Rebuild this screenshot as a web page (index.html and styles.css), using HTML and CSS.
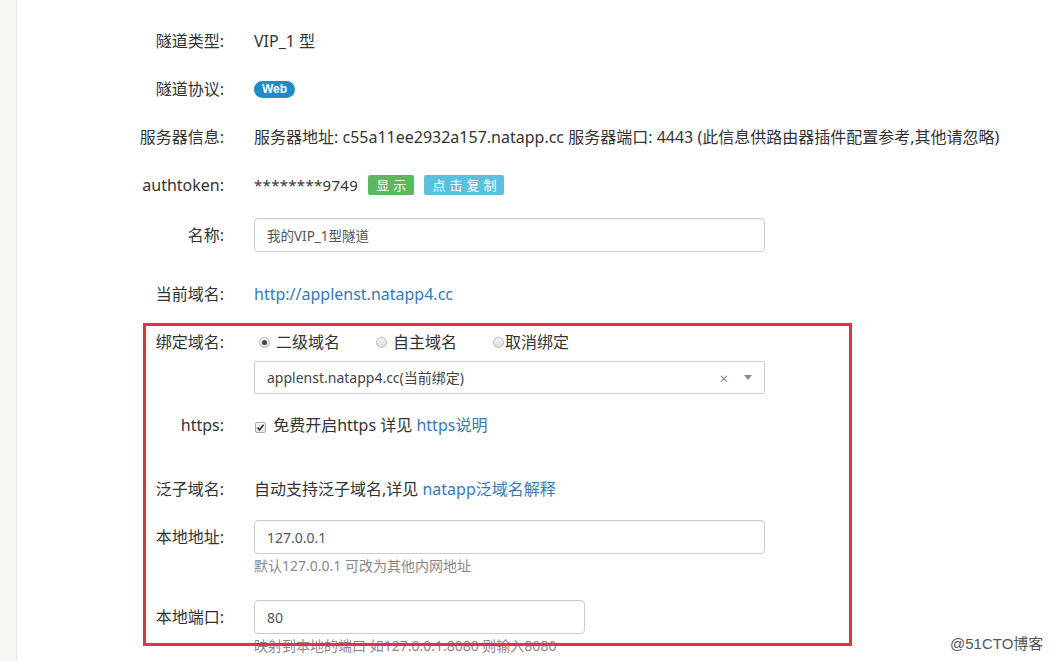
FILE: index.html
```
<!DOCTYPE html>
<html>
	<head>
		<title>隧道配置</title>
		<link rel="stylesheet" href="styles.css">
	</head>
	<body>
		<div class="pagina">
			<div class="lateral"></div>

			<div class="contenido">
				<form class="formulario">

					<div class="fila">
						<label class="etiqueta">隧道类型:</label>
						<div class="valor">VIP_1 型</div>
					</div>

					<div class="fila">
						<label class="etiqueta">隧道协议:</label>
						<div class="valor"><span class="insignia">Web</span></div>
					</div>

					<div class="fila">
						<label class="etiqueta">服务器信息:</label>
						<div class="valor">服务器地址: c55a11ee2932a157.natapp.cc 服务器端口: 4443 (此信息供路由器插件配置参考,其他请忽略)</div>
					</div>

					<div class="fila">
						<label class="etiqueta">authtoken:</label>
						<div class="valor">
							<span class="token">********9749</span>
							<span class="boton boton_verde">显示</span>
							<span class="boton boton_azul">点击复制</span>
						</div>
					</div>

					<div class="fila fila_ancha">
						<label class="etiqueta">名称:</label>
						<div class="valor">
							<input type="text" class="caja caja_larga caja_cjk" value="我的VIP_1型隧道">
						</div>
					</div>

					<div class="fila">
						<label class="etiqueta">当前域名:</label>
						<div class="valor"><a class="enlace" href="#">http://applenst.natapp4.cc</a></div>
					</div>

					<div class="fila fila_compuesta">
						<label class="etiqueta">绑定域名:</label>
						<div class="valor">
							<div class="radios">
								<span class="opcion"><span class="radio activo"></span>二级域名</span>
								<span class="opcion"><span class="radio"></span>自主域名</span>
								<span class="opcion pegada"><span class="radio"></span>取消绑定</span>
							</div>
							<div class="selector caja_larga">
								<span class="selector_texto">applenst.natapp4.cc(当前绑定)</span>
								<span class="selector_quitar">×</span>
								<span class="selector_flecha"></span>
							</div>
						</div>
					</div>

					<div class="fila fila_separada">
						<label class="etiqueta">https:</label>
						<div class="valor">
							<span class="casilla">
								<svg width="9" height="9" viewBox="0 0 9 9"><path d="M1.5 4.6 L3.6 6.8 L7.6 1.8" fill="none" stroke="#333" stroke-width="1.6"/></svg>
							</span>
							免费开启https 详见 <a class="enlace" href="#">https说明</a>
						</div>
					</div>

					<div class="fila">
						<label class="etiqueta">泛子域名:</label>
						<div class="valor">自动支持泛子域名,详见 <a class="enlace" href="#">natapp泛域名解释</a></div>
					</div>

					<div class="fila fila_compuesta fila_ayuda">
						<label class="etiqueta">本地地址:</label>
						<div class="valor">
							<input type="text" class="caja caja_larga" value="127.0.0.1">
							<div class="ayuda">默认127.0.0.1 可改为其他内网地址</div>
						</div>
					</div>

					<div class="fila fila_compuesta">
						<label class="etiqueta">本地端口:</label>
						<div class="valor">
							<input type="text" class="caja caja_corta" value="80">
							<div class="ayuda">映射到本地的端口 如127.0.0.1:8080 则输入8080</div>
						</div>
					</div>

				</form>

				<div class="marco_rojo"></div>
				<div class="marca">@51CTO博客</div>
			</div>
		</div>
	</body>
</html>
```

FILE: styles.css
```
	body
	{
		margin: 0;
		background-color: white;
		font-family: "Noto Sans", "Noto Sans CJK SC", sans-serif;
		font-size: 16px;
		color: #333;
		overflow: hidden;
	}

	.pagina
	{
		display: flex;
		height: 661px;
	}

	.lateral
	{
		width: 16px;
		background-color: #f8f7f1;
		border-right: 1px solid #ecebe6;
	}

	.contenido
	{
		position: relative;
		flex: 1;
	}

	.formulario
	{
		display: flex;
		flex-direction: column;
		padding-top: 24px;
	}

	.fila
	{
		display: flex;
		align-items: flex-start;
		min-height: 34px;
		margin-bottom: 14px;
	}

	.fila_ancha
	{
		margin-top: 2px;
		margin-bottom: 25px;
	}

	.fila_separada
	{
		margin-bottom: 30px;
	}

	.fila_ayuda
	{
		margin-bottom: 22px;
	}

	.etiqueta
	{
		width: 207px;
		text-align: right;
		line-height: 34px;
		flex-shrink: 0;
	}

	.valor
	{
		margin-left: 30px;
		line-height: 34px;
		white-space: nowrap;
	}

	.insignia
	{
		display: inline-block;
		background-color: #1c8ccc;
		color: white;
		font-family: "Liberation Sans", sans-serif;
		font-weight: bold;
		font-size: 12px;
		line-height: 17px;
		padding: 0 8px;
		border-radius: 9px;
		vertical-align: 2px;
	}

	.token
	{
		font-size: 15px;
		letter-spacing: 0.3px;
	}

	.boton
	{
		display: inline-block;
		color: white;
		font-size: 13px;
		line-height: 20px;
		letter-spacing: 4px;
		padding: 0 4px 0 8px;
		border-radius: 2px;
		margin-left: 6px;
		vertical-align: 1px;
	}

	.boton_verde
	{
		background-color: #5cb85c;
	}

	.boton_azul
	{
		background-color: #5bc0de;
	}

	.caja
	{
		box-sizing: border-box;
		height: 34px;
		border: 1px solid #ccc;
		border-radius: 4px;
		padding: 0 12px;
		font-family: "Noto Sans", "Noto Sans CJK SC", sans-serif;
		font-size: 14px;
		color: #555;
		box-shadow: inset 0 1px 1px rgba(0, 0, 0, 0.06);
		display: block;
	}

	.caja_cjk
	{
		font-size: 13.5px;
	}

	.caja_larga
	{
		width: 511px;
	}

	.caja_corta
	{
		width: 331px;
	}

	.enlace
	{
		color: #337ab7;
		text-decoration: none;
	}

	.radios
	{
		display: flex;
		height: 34px;
		align-items: center;
	}

	.opcion
	{
		display: flex;
		align-items: center;
		margin-right: 31px;
	}

	.radio
	{
		box-sizing: border-box;
		width: 11px;
		height: 11px;
		border-radius: 50%;
		border: 1px solid #b8b8b8;
		background: linear-gradient(#f4f4f4, #dcdcdc);
		margin: 0 6px 0 5px;
		position: relative;
	}

	.pegada .radio
	{
		margin-right: 1px;
	}

	.radio.activo::after
	{
		content: "";
		position: absolute;
		left: 2px;
		top: 2px;
		width: 5px;
		height: 5px;
		border-radius: 50%;
		background-color: #444;
	}

	.selector
	{
		box-sizing: border-box;
		height: 33px;
		margin-top: 2px;
		border: 1px solid #ccc;
		border-radius: 2px;
		display: flex;
		align-items: center;
		padding: 0 12px;
		font-size: 14px;
		color: #444;
	}

	.selector_texto
	{
		flex: 1;
	}

	.selector_quitar
	{
		color: #888;
		font-size: 15px;
		margin-right: 16px;
	}

	.selector_flecha
	{
		width: 0;
		height: 0;
		border-left: 4px solid transparent;
		border-right: 4px solid transparent;
		border-top: 5px solid #888;
	}

	.casilla
	{
		display: inline-flex;
		align-items: center;
		justify-content: center;
		box-sizing: border-box;
		width: 11px;
		height: 11px;
		border: 1px solid #aaa;
		border-radius: 2px;
		background: linear-gradient(#fafafa, #e2e2e2);
		margin: 0 3px 0 1px;
		vertical-align: -1px;
	}

	.ayuda
	{
		font-size: 14px;
		color: #888;
		line-height: 24px;
	}

	.marco_rojo
	{
		position: absolute;
		left: 126px;
		top: 323px;
		width: 703px;
		height: 317px;
		border: 3px solid #d8393e;
		pointer-events: none;
	}

	.marca
	{
		position: absolute;
		left: 933px;
		top: 632px;
		font-family: "Liberation Sans", "Noto Sans CJK SC", sans-serif;
		font-size: 15px;
		color: #555;
	}
```
